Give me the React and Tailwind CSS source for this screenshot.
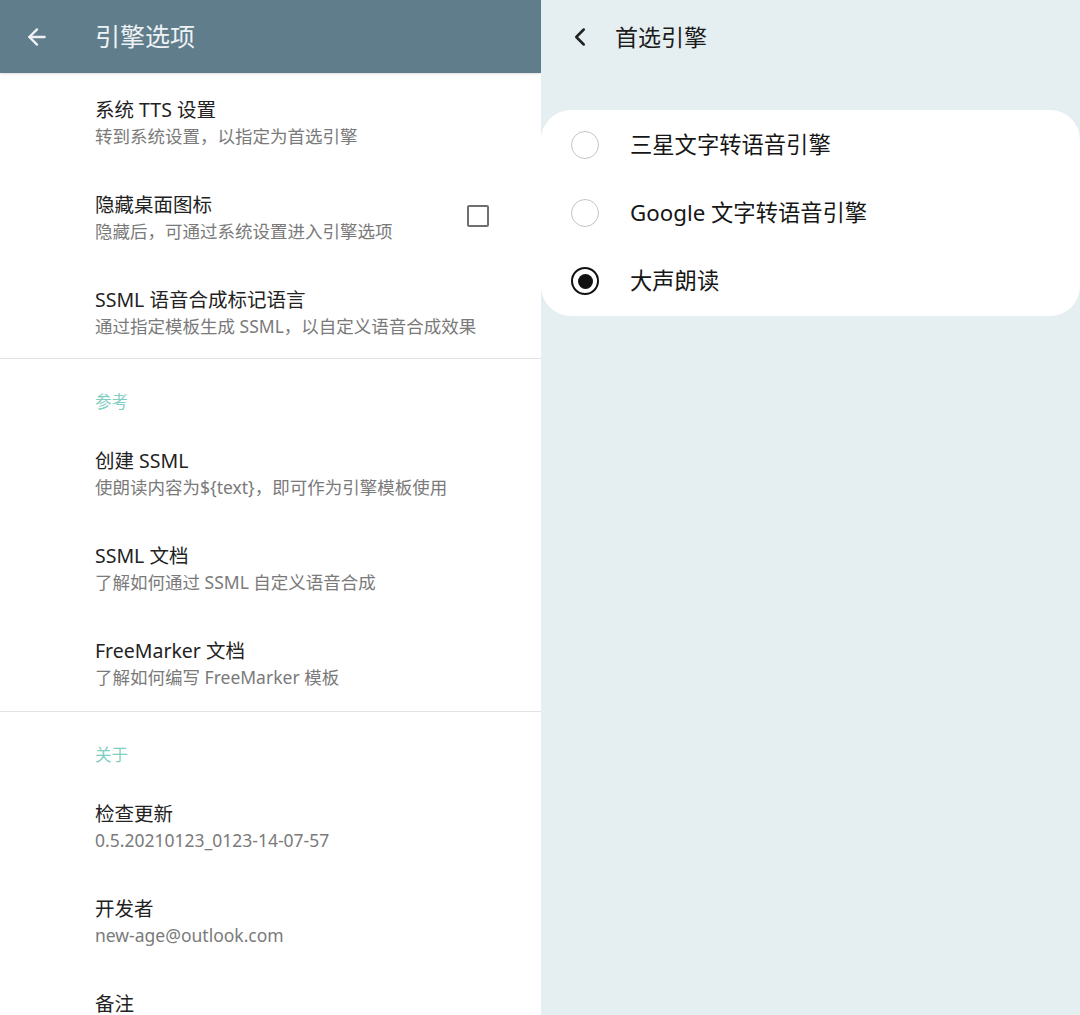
import React from 'react';
import { ArrowLeft, ChevronLeft } from 'lucide-react';

const font = { fontFamily: '"Noto Sans", "Noto Sans CJK SC", sans-serif' };

const Item = ({ title, summary, checkbox }) => (
    <div className="h-[95px] shrink-0 pt-[24px] pl-[95px] pr-[52px] flex items-start justify-between">
        <div className="flex flex-col">
            <span className="text-[19.5px] leading-[26px] text-[#222222]">{title}</span>
            {summary && <span className="text-[17.5px] leading-[26px] text-[#7a7a7a]">{summary}</span>}
        </div>
        {checkbox && (
            <div className="mt-[13px] w-[22px] h-[22px] border-2 border-[#6f6f6f] rounded-[2px]"></div>
        )}
    </div>
);

const SectionHeader = ({ label }) => (
    <div className="shrink-0 pl-[95px] pt-[31px] pb-[10px] text-[16.5px] leading-[24px] text-[#7fcfc2]">{label}</div>
);

const Radio = ({ checked }) =>
    checked ? (
        <div className="w-[28px] h-[28px] rounded-full border-2 border-[#111111] flex items-center justify-center">
            <div className="w-[15px] h-[15px] rounded-full bg-[#111111]"></div>
        </div>
    ) : (
        <div className="w-[28px] h-[28px] rounded-full border-[1.5px] border-[#c4c4c4]"></div>
    );

const engines = [
    { label: '三星文字转语音引擎', checked: false },
    { label: 'Google 文字转语音引擎', checked: false },
    { label: '大声朗读', checked: true },
];

export default function App() {
    return (
        <div className="w-[1080px] h-[1015px] flex overflow-hidden" style={font}>
            {/* Left: engine options */}
            <div className="w-[541px] h-full bg-white flex flex-col">
                <header className="h-[73px] shrink-0 bg-[#607d8b] flex items-center shadow-sm">
                    <ArrowLeft className="ml-[24px] text-[#eef2f4]" size={26} strokeWidth={2.2} />
                    <span className="ml-[45px] text-[25px] text-[#eef2f4]">引擎选项</span>
                </header>
                <Item title="系统 TTS 设置" summary="转到系统设置，以指定为首选引擎" />
                <Item title="隐藏桌面图标" summary="隐藏后，可通过系统设置进入引擎选项" checkbox />
                <Item title="SSML 语音合成标记语言" summary="通过指定模板生成 SSML，以自定义语音合成效果" />
                <div className="h-px shrink-0 bg-[#e2e2e2]"></div>
                <SectionHeader label="参考" />
                <Item title="创建 SSML" summary="使朗读内容为${text}，即可作为引擎模板使用" />
                <Item title="SSML 文档" summary="了解如何通过 SSML 自定义语音合成" />
                <Item title="FreeMarker 文档" summary="了解如何编写 FreeMarker 模板" />
                <div className="h-px shrink-0 mt-[2px] bg-[#e2e2e2]"></div>
                <SectionHeader label="关于" />
                <Item title="检查更新" summary="0.5.20210123_0123-14-07-57" />
                <Item title="开发者" summary="new-age@outlook.com" />
                <Item title="备注" />
            </div>

            {/* Right: preferred engine */}
            <div className="flex-1 h-full bg-[#e5eef0] flex flex-col">
                <div className="h-[74px] shrink-0 flex items-center">
                    <ChevronLeft className="ml-[24px] text-[#222222]" size={30} strokeWidth={2} />
                    <span className="ml-[20px] text-[23px] text-[#1c1c1c]">首选引擎</span>
                </div>
                <div className="mt-[36px] bg-white rounded-[30px] py-px">
                    {engines.map((e) => (
                        <div key={e.label} className="h-[68px] flex items-center pl-[30px]">
                            <Radio checked={e.checked} />
                            <span className="ml-[31px] text-[22.3px] text-[#161616]">{e.label}</span>
                        </div>
                    ))}
                </div>
            </div>
        </div>
    );
}
